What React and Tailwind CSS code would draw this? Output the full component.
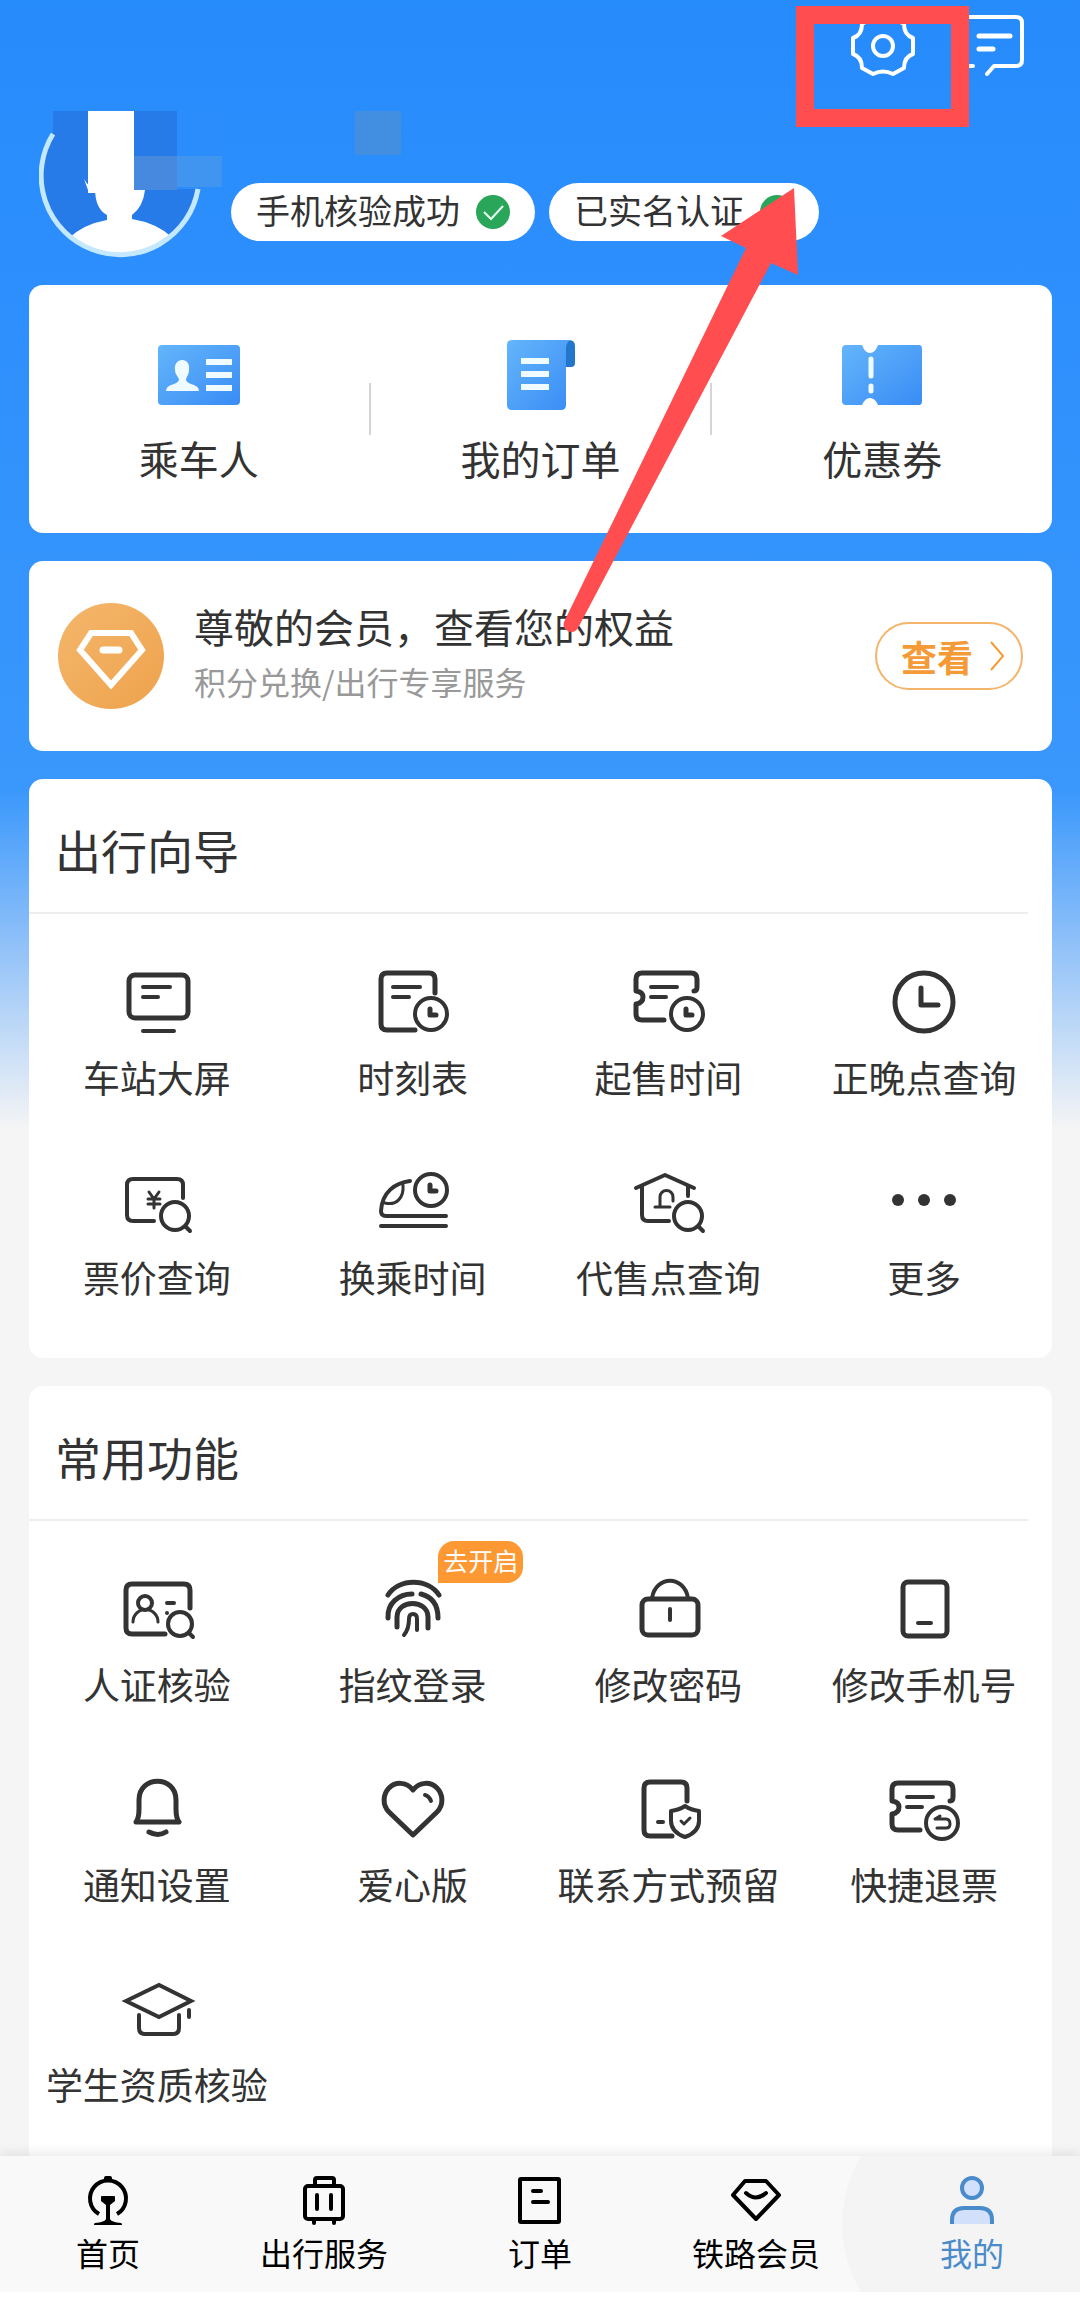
import { useState } from 'react'

const line = {
  fill: 'none',
  stroke: 'currentColor',
  strokeWidth: 4,
  strokeLinecap: 'round',
  strokeLinejoin: 'round',
}

const bold = { ...line, strokeWidth: 5 }

// Piezas compartidas por varios iconos
const Clock = ({ x, y }) => (
  <>
    <circle cx={x} cy={y} r="16" strokeWidth="4" />
    <path d={`M${x - 1} ${y - 5}v6h6`} />
  </>
)

const Magnifier = ({ x, y, r = 14 }) => (
  <>
    <circle cx={x} cy={y} r={r} strokeWidth="4" />
    <path d={`M${x + r - 3} ${y + r - 3}l4 4`} strokeWidth="4" />
  </>
)

const Ticket = () => (
  <>
    <path d="M26 -11Q29 -11 29 -15V-23q0-6-6-6H-26q-6 0-6 6V-11Q-25 -10 -25 -5Q-25 1 -32 2V12q0 6 6 6H-4" />
    <path d="M-17 -15H9M-17 -5H-2" strokeWidth="4" />
  </>
)

const guide = [
  {
    label: '车站大屏',
    icon: (
      <>
        <rect x="-28" y="-27" width="59" height="43" rx="6" />
        <path d="M-14 -15H13M-14 -5H1M-14 29H17" strokeWidth="4" />
      </>
    ),
  },
  {
    label: '时刻表',
    icon: (
      <>
        <path d="M22 -9V-23q0-6-6-6H-26q-6 0-6 6V22q0 6 6 6H2" />
        <path d="M-20 -15H7M-20 -5H-4" strokeWidth="4" />
        <Clock x={18} y={12} />
      </>
    ),
  },
  { label: '起售时间', icon: <><Ticket /><Clock x={19} y={12} /></> },
  {
    label: '正晚点查询',
    icon: (
      <>
        <circle r="29" />
        <path d="M-3 -14V3H14" />
      </>
    ),
  },
  {
    label: '票价查询',
    icon: (
      <>
        <path d="M26 -4V-17q0-6-6-6H-24q-6 0-6 6V13q0 6 6 6H-3" strokeWidth="4" />
        <path d="M-8 -10L-3 -3L2 -10M-3 -3V6M-9 -3H3M-9 2H3" strokeWidth="3" />
        <Magnifier x={18} y={14} />
      </>
    ),
  },
  {
    label: '换乘时间',
    icon: (
      <>
        <path d="M33 14H-27q-5 0-5-5C-31 -10 -18 -19 -3 -21" strokeWidth="4" />
        <path d="M-10 -17C-9 -5 -16 4 -28 1" strokeWidth="3" />
        <path d="M-32 24H33" strokeWidth="4" />
        <Clock x={18} y={-12} />
      </>
    ),
  },
  {
    label: '代售点查询',
    icon: (
      <>
        <path d="M-32 -14L-3 -27L26 -14" strokeWidth="4" />
        <path d="M-26 -16V13q0 6 6 6H1M20 -16V-6" strokeWidth="4" />
        <path d="M-13 5H2M-8 4V-5a6 6 0 0 1 13 0V-1" strokeWidth="3" />
        <Magnifier x={20} y={14} />
      </>
    ),
  },
  {
    label: '更多',
    icon: (
      <g fill="currentColor" stroke="none">
        <circle cx="-26" cy="-2" r="6" />
        <circle cx="0" cy="-2" r="6" />
        <circle cx="26" cy="-2" r="6" />
      </g>
    ),
  },
]

const common = [
  {
    label: '人证核验',
    icon: (
      <>
        <path d="M33 -1V-19q0-6-6-6H-25q-6 0-6 6V19q0 6 6 6H8" />
        <circle cx="-12" cy="-6" r="7" strokeWidth="4" />
        <path d="M-24 13a12 12 0 0 1 25 0" strokeWidth="3" />
        <path d="M10 -6H17M10 4h0" strokeWidth="4" />
        <Magnifier x={23} y={15} r={12} />
      </>
    ),
  },
  {
    label: '指纹登录',
    badge: '去开启',
    icon: (
      <>
        <path d="M-25 -14C-14 -31 15 -31 26 -14" />
        <path d="M-25 9C-26 -6 -14 -15 -1 -15M8 -15C20 -12 25 -3 25 9" />
        <path d="M-16 18V8C-16 -10 15 -10 15 8V19" />
        <path d="M-9 26Q-4 20 -4 10Q-4 5 0 5Q4 5 4 10V21" strokeWidth="4" />
      </>
    ),
  },
  {
    label: '修改密码',
    icon: (
      <>
        <rect x="-26" y="-10" width="56" height="36" rx="6" />
        <path d="M-16 -11C-12 -34 16 -34 20 -11M2 0V11" strokeWidth="4" />
      </>
    ),
  },
  {
    label: '修改手机号',
    icon: (
      <>
        <rect x="-21" y="-27" width="44" height="54" rx="5" />
        <path d="M-6 14H7" strokeWidth="4" />
      </>
    ),
  },
  {
    label: '通知设置',
    icon: (
      <>
        <path d="M-21 13Q-18 9 -18 0V-9C-18 -34 19 -34 19 -9V0Q19 9 22 13Z" />
        <path d="M-8 23Q1 28 9 23" />
      </>
    ),
  },
  {
    label: '爱心版',
    icon: (
      <>
        <path d="M0 -19C-7 -28 -18 -27 -24 -21C-30 -15 -31 -4 -24 3L0 26L24 3C31 -4 30 -15 24 -21C18 -27 7 -28 0 -19Z" />
        <path d="M12 -14Q16 -13 18 -8" strokeWidth="4" />
      </>
    ),
  },
  {
    label: '联系方式预留',
    icon: (
      <>
        <path d="M19 -8V-21q0-6-6-6H-18q-6 0-6 6V21q0 6 6 6H4" />
        <path d="M-10 13H-5" strokeWidth="4" />
        <path d="M17 -3Q23 1 31 2V12Q31 23 17 28Q3 23 3 12V2Q11 1 17 -3Z" strokeWidth="4" />
        <path d="M13 12L16 15L22 9" strokeWidth="3" />
      </>
    ),
  },
  {
    label: '快捷退票',
    icon: (
      <>
        <g transform="translate(0 3)"><Ticket /></g>
        <circle cx="18" cy="14" r="16" strokeWidth="4" />
        <path d="M11 10H22Q26 10 26 15Q26 19 22 19H13M11 10L16 7" strokeWidth="3" />
      </>
    ),
  },
  {
    label: '学生资质核验',
    icon: (
      <>
        <path d="M-31 -8L2 -24L34 -8L2 8Z" strokeWidth="4" strokeLinejoin="miter" />
        <path d="M-18 6V19q0 6 6 6H16q6 0 6-6V6M32 1V8" strokeWidth="4" />
      </>
    ),
  },
]

const tabs = [
  {
    label: '首页',
    icon: (
      <>
        <path d="M-9 13A18 18 0 1 1 9 13" strokeLinecap="butt" />
        <path d="M-4 -19V-23q0-2 2-2H2q2 0 2 2V-19ZM-6 -5H6q1 0 1 1V0L2 4V18Q3 21 13 22Q14 22 14 24H-14Q-14 22 -13 22Q-3 21 -2 18V4L-7 0V-4q0-1 1-1Z" fill="currentColor" stroke="none" />
      </>
    ),
  },
  {
    label: '出行服务',
    icon: (
      <>
        <rect x="-19" y="-15" width="38" height="33" rx="3" />
        <path d="M-9 -16V-21q0-2 2-2H8q2 0 2 2V-16M-7 -6V8M7 -6V8M-10 19V22M10 19V22" />
      </>
    ),
  },
  {
    label: '订单',
    icon: (
      <>
        <rect x="-20" y="-22" width="39" height="43" rx="1" />
        <path d="M-7 -10H1M-7 1H8" />
      </>
    ),
  },
  {
    label: '铁路会员',
    icon: (
      <>
        <path d="M-11 -20H10L23 -6L0 18L-23 -6Z" />
        <path d="M-10 -8Q0 1 10 -8" />
      </>
    ),
  },
  {
    label: '我的',
    icon: (
      <g fill="#d2e0fc">
        <circle cx="0" cy="-13" r="10" />
        <path d="M-20 23V19Q-20 7 -8 7H8Q20 7 20 19V23" strokeLinecap="butt" />
      </g>
    ),
  },
]

function Verified({ children }) {
  return (
    <button type="button" className="flex h-[58px] items-center gap-4 rounded-full bg-white px-[25px] text-[34px] text-[#333]">
      <span className="pb-1 leading-[50px]">{children}</span>
      <svg viewBox="0 0 34 34" className="size-[34px]">
        <circle cx="17" cy="17" r="17" fill="#2aa65a" />
        <path d="M8 17L15 24L27 11" fill="none" stroke="#e8fff0" strokeWidth="2" />
      </svg>
    </button>
  )
}

function Shortcut({ label, children }) {
  return (
    <button type="button" className="flex flex-1 flex-col items-center gap-5 text-[40px] leading-[56px]">
      <span className="flex h-[70px] items-center">{children}</span>
      {label}
    </button>
  )
}

function Section({ title, items, className }) {
  return (
    <section className={`bg-white ${className}`}>
      <h2 className="mr-6 flex h-[135px] items-center border-b-2 border-[#eee] px-[26px] pt-2 text-[46px]">{title}</h2>
      <div className="grid grid-cols-4 gap-y-16 pt-[52px]">
        {items.map(item => (
          <button key={item.label} type="button" className="relative flex flex-col items-center gap-[14px] text-[37px] leading-[50px] whitespace-nowrap">
            <svg viewBox="-40 -36 80 72" className="h-[72px] w-20" {...bold}>{item.icon}</svg>
            {item.label}
            {item.badge && (
              <span className="absolute -top-8 left-[60%] rounded-2xl rounded-bl-none bg-[#fd9833] px-[5px] pb-1 text-[25px] leading-[38px] text-white">{item.badge}</span>
            )}
          </button>
        ))}
      </div>
    </section>
  )
}

export default function App() {
  const [active, setActive] = useState('我的')

  return (
    <div lang="zh-CN" className="relative flex min-h-screen flex-col bg-[#f5f5f5] bg-[linear-gradient(180deg,#268bfb_0,#2d8ffd_280px,#3a98fc_790px,#88bdf9_930px,#f5f5f5_1130px)] font-['Noto_Sans_CJK_SC',sans-serif] text-[#333]">
      {/* Cabecera */}
      <header>
        <div className="flex justify-end gap-[41px] pt-[14px] pr-14 text-white">
          <button type="button" aria-label="设置">
            <svg viewBox="-32 -32 64 64" className="size-16" {...line}>
              <path d="M30 -8V8Q21 11 21 22L10 28Q0 23 -10 28L-21 22Q-21 11 -30 8V-8Q-21 -11 -21 -22L-10 -28Q0 -23 10 -28L21 -22Q21 -11 30 -8Z" />
              <circle r="10" />
            </svg>
          </button>
          <button type="button" aria-label="消息">
            <svg viewBox="0 0 68 64" className="h-16 w-[68px]" {...line}>
              <path d="M17 52H8q-6 0-6-6V9q0-6 6-6H60q6 0 6 6V46q0 6-6 6H38L31 60" />
              <path d="M23 22H54M23 35H37" strokeWidth="5" />
            </svg>
          </button>
        </div>

        <div className="flex items-start gap-2 pt-[33px] pb-[26px] pl-[39px]">
          <svg viewBox="0 0 184 148" className="h-[148px] w-[184px]">
            <defs>
              <clipPath id="face"><circle cx="81" cy="65" r="80" /></clipPath>
            </defs>
            <g clipPath="url(#face)">
              <path d="M0 0H162V148H0Z" fill="#267be8" />
              <path d="M68 98V109Q45 113 30 127V148H134V127Q118 112 93 108V98Z" fill="#fff" />
            </g>
            <path d="M138 0H184V78H138Z" fill="#2a8dfb" />
            <path d="M0 0H14V24H0Z" fill="#2a8dfb" />
            <path d="M14 0H138V78H14Z" fill="#267be8" />
            <path d="M14 23A79 79 0 1 0 159 78" fill="none" stroke="#c4e9ff" strokeWidth="5" />
            <path d="M45 68Q50 77 56 77Q56 98 68 104H93Q104 96 106 79H49Z" fill="#fff" />
            <path d="M49 0H95V82H49Z" fill="#fff" />
            <path d="M95 45H138V79H95Z" fill="#4889e0" />
            <path d="M138 45H183V76H138Z" fill="#4095f1" />
          </svg>
          <div className="flex flex-col gap-7">
            <span className="ml-[124px] h-11 w-[46px] bg-[#428fe2]" />
            <div className="flex gap-[14px]">
              <Verified>手机核验成功</Verified>
              <Verified>已实名认证</Verified>
            </div>
          </div>
        </div>
      </header>

      <main className="flex flex-1 flex-col gap-7 pr-7 pl-[29px]">
        {/* Accesos directos */}
        <section className="flex rounded-[14px] bg-white pt-[55px] pb-[47px]">
          <Shortcut label="乘车人">
            <svg viewBox="0 0 82 60" className="h-[60px] w-[82px]">
              <defs>
                <linearGradient id="blue" x1="0" y1="0" x2="1" y2="1">
                  <stop offset="0" stopColor="#64b5fb" />
                  <stop offset="1" stopColor="#398cf5" />
                </linearGradient>
              </defs>
              <rect width="82" height="60" rx="4" fill="url(#blue)" />
              <path d="M24 15C29 15 32 19 31 25C31 30 28 32 28 35Q29 38 36 40Q41 42 41 46H8Q8 42 13 40Q20 38 21 35C21 32 17 30 17 25C16 19 20 15 24 15ZM48 14H74V20H48ZM48 27H74V33H48ZM48 40H74V46H48Z" fill="#f0fbff" />
            </svg>
          </Shortcut>
          <span className="mt-[43px] h-[52px] w-[2px] bg-[#d5d5d5]" />
          <Shortcut label="我的订单">
            <svg viewBox="0 0 68 70" className="h-[70px] w-[68px]">
              <path d="M55 0H62Q68 0 68 6V23Q68 27 64 27H55Z" fill="#2277cc" />
              <path d="M5 0H64Q59 2 59 8V65Q59 70 54 70H5Q0 70 0 65V5Q0 0 5 0Z" fill="url(#blue)" />
              <path d="M14 18H42V24H14ZM14 31H42V37H14ZM14 44H42V50H14Z" fill="#f0fbff" />
            </svg>
          </Shortcut>
          <span className="mt-[43px] h-[52px] w-[2px] bg-[#d5d5d5]" />
          <Shortcut label="优惠券">
            <svg viewBox="0 0 80 60" className="h-[60px] w-20">
              <path d="M4 0H20Q23 8 28 8Q33 8 36 0H77Q80 0 80 4V56Q80 60 77 60H36Q33 53 28 53Q23 53 20 60H4Q0 60 0 56V4Q0 0 4 0Z" fill="url(#blue)" />
              <path d="M29 14V31M29 41V46" stroke="#f0fbff" strokeWidth="5" strokeLinecap="round" />
            </svg>
          </Shortcut>
        </section>

        {/* Socios */}
        <section className="flex h-[190px] items-center rounded-[14px] bg-white px-[29px]">
          <svg viewBox="-53 -53 106 106" className="size-[106px]">
            <defs>
              <linearGradient id="gold" x1="0" y1="0" x2="1" y2="1">
                <stop offset="0" stopColor="#f4b76c" />
                <stop offset="1" stopColor="#eea24c" />
              </linearGradient>
            </defs>
            <circle r="53" fill="url(#gold)" />
            <path d="M-20 -23H20L31 -6L0 29L-31 -6Z" fill="none" stroke="#fff" strokeWidth="6" />
            <path d="M-8 -6H8" stroke="#fff" strokeWidth="7" strokeLinecap="round" />
          </svg>
          <div className="ml-[30px] flex-1 pb-[10px]">
            <p className="text-[40px] leading-[60px]">尊敬的会员，查看您的权益</p>
            <p className="text-[32px] leading-[50px] text-[#999]">积分兑换/出行专享服务</p>
          </div>
          <button type="button" className="flex h-[68px] w-[148px] items-center gap-4 rounded-full border-2 border-[#f3b46c] pl-6 text-[36px] font-bold text-[#f49a36]">
            查看
            <svg viewBox="0 0 16 32" className="h-8 w-4" fill="none" stroke="currentColor" strokeWidth="2">
              <path d="M2 2L14 16L2 30" />
            </svg>
          </button>
        </section>

        <Section title="出行向导" items={guide} className="rounded-[14px] pb-14" />
        <Section title="常用功能" items={common} className="flex-1 rounded-t-[14px] pb-10" />
      </main>

      {/* Barra inferior */}
      <nav className="relative flex overflow-hidden border-b-10 border-white bg-[#f9f9f9] shadow-[0_-2px_12px_rgba(0,0,0,0.1)]">
        {tabs.map(tab => {
          const on = tab.label === active
          return (
            <button
              key={tab.label}
              type="button"
              onClick={() => setActive(tab.label)}
              className={`relative flex flex-1 flex-col items-center gap-[6px] pt-5 pb-5 text-[32px] leading-10 ${on ? 'text-[#4a8bcb]' : 'text-black'}`}
            >
              {on && <span className="absolute top-1/2 left-1/2 size-[260px] -translate-1/2 rounded-full bg-[#f4f4f4]" />}
              <svg viewBox="-25 -25 50 50" className="relative size-[50px]" {...line}>{tab.icon}</svg>
              <span className="relative">{tab.label}</span>
            </button>
          )
        })}
      </nav>

      {/* Marca roja: recuadro sobre ajustes y flecha */}
      <svg viewBox="0 0 1080 640" className="pointer-events-none absolute top-0 right-0 w-[1080px]" aria-hidden="true">
        <rect x="805" y="15" width="155" height="103" fill="none" stroke="#ff4d50" strokeWidth="18" />
        <path d="M794 188L798 275L771 263L578 628Q574 634 568 631Q562 628 564 622L746 248L721 236Z" fill="#ff4d50" />
      </svg>
    </div>
  )
}
